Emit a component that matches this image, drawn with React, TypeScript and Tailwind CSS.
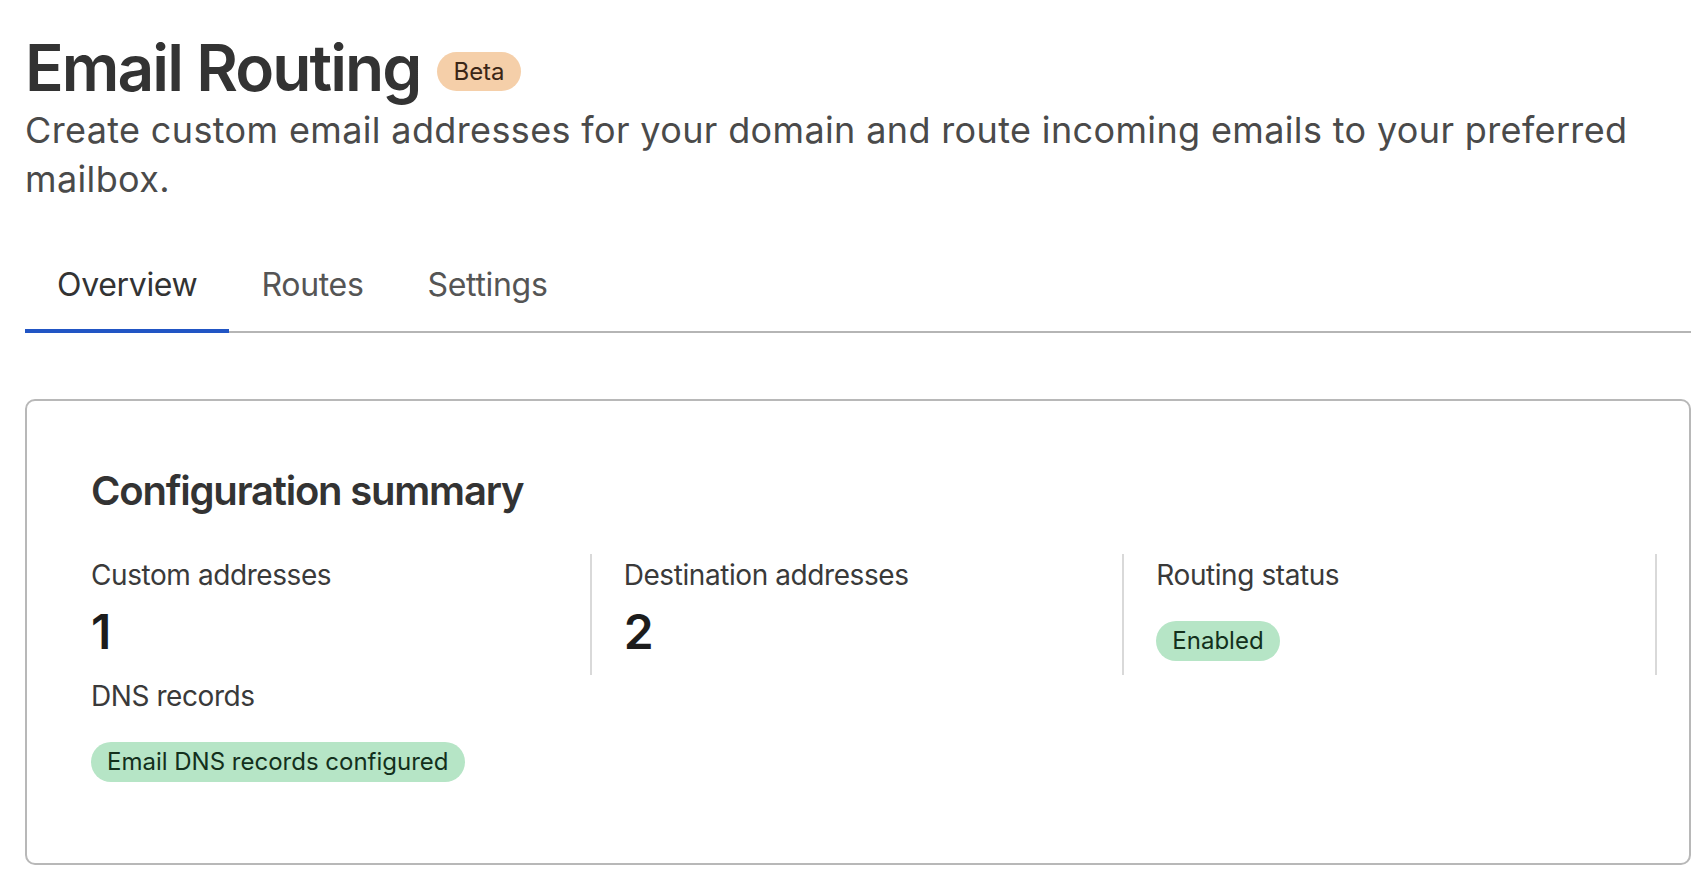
import clsx from "clsx";

const tabs = ["Overview", "Routes", "Settings"];

type Stat = { label: string; value?: string; badge?: string };

const stats: Stat[] = [
  { label: "Custom addresses", value: "1" },
  { label: "Destination addresses", value: "2" },
  { label: "Routing status", badge: "Enabled" },
  { label: "DNS records", badge: "Email DNS records configured" },
];

function GreenBadge({ children }: { children: React.ReactNode }) {
  return (
    <span className="inline-flex h-[40px] items-center rounded-full bg-[#b6e5c6] px-4 text-[24px] text-[#13301c]">
      {children}
    </span>
  );
}

export default function App() {
  return (
    <div
      className="min-h-screen bg-white pl-[25px] pr-[11px] pt-[29px] text-[#333]"
      style={{ fontFamily: "Inter, 'Noto Sans', sans-serif" }}
    >
      <div className="flex items-center gap-[17px]">
        <h1 className="text-[64px] font-semibold leading-[77px] tracking-[-0.03em] text-[#333]">Email Routing</h1>
        <span className="mt-[8px] inline-flex h-[39px] items-center rounded-full bg-[#f5cfa9] px-4 text-[24px] text-[#3b2616]">
          Beta
        </span>
      </div>
      <p className="text-[36px] leading-[49px] tracking-[0.01em] text-[#4a4a4a]">
        Create custom email addresses for your domain and route incoming emails to your preferred mailbox.
      </p>

      <div className="mt-[37px] flex border-b-2 border-[#b5b5b5]">
        {tabs.map((t, i) => (
          <div
            key={t}
            className={clsx(
              "-mb-[2px] px-8 pt-5 pb-[20px] text-[32px] leading-[48px] tracking-[-0.01em]",
              i === 0 ? "border-b-4 border-[#2155c4] text-[#333]" : "border-b-4 border-transparent text-[#555]"
            )}
          >
            {t}
          </div>
        ))}
      </div>

      <div className="mt-[66px] rounded-[10px] border-2 border-[#b8b8b8] px-8 pt-[66px] pb-[67px]">
        <h2 className="pl-8 text-[40px] font-semibold leading-[48px] tracking-[-0.03em] text-[#333]">
          Configuration summary
        </h2>
        <div className="mt-[39px] grid grid-cols-3">
          {stats.map((s, i) => (
            <div
              key={s.label}
              className={clsx("pl-8 pb-[14px]", i < 3 && "border-r-2 border-[#d9d9d9]")}
            >
              <div className="text-[28px] leading-[42px] tracking-[-0.015em] text-[#3a3a3a]">{s.label}</div>
              {s.value && (
                <div className="mt-2 text-[48px] font-semibold leading-[56px] text-[#1c1c1c]">{s.value}</div>
              )}
              {s.badge && (
                <div className="mt-[25px]">
                  <GreenBadge>{s.badge}</GreenBadge>
                </div>
              )}
            </div>
          ))}
        </div>
      </div>
    </div>
  );
}
